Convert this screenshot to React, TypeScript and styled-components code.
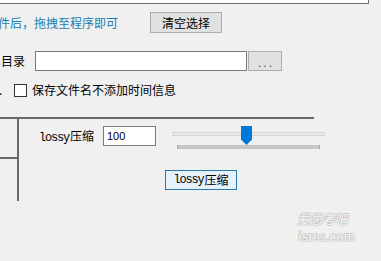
import React from 'react';
import styled, { createGlobalStyle } from 'styled-components';

const Global = createGlobalStyle`
  html, body { margin: 0; padding: 0; background: #f0f0f0; overflow: hidden; }
  body { font-family: "Noto Sans CJK SC", "Noto Sans", sans-serif; font-size: 12px; color: #000; }
`;

const Window = styled.div`
  width: 381px;
  height: 261px;
  overflow: hidden;
  position: relative;
  background: #f0f0f0;
  display: flex;
  flex-direction: column;
`;

const ListBox = styled.div`
  box-sizing: border-box;
  flex: none;
  margin-top: -36px;
  margin-left: -8px;
  width: 377px;
  height: 40px;
  background: #fff;
  border: 1px solid #6e6e6e;
`;

const Row = styled.div<{ $top: number; $left?: number }>`
  display: flex;
  align-items: center;
  flex: none;
  margin-top: ${p => p.$top}px;
  margin-left: ${p => p.$left ?? 0}px;
`;

const Hint = styled.span`
  flex: none;
  margin-left: -14px;
  width: 164px;
  color: #1780b5;
  white-space: nowrap;
  overflow: hidden;
  line-height: 16px;
`;

const Label = styled.span<{ $left: number; $w: number }>`
  flex: none;
  margin-left: ${p => p.$left}px;
  width: ${p => p.$w}px;
  white-space: nowrap;
  overflow: hidden;
  line-height: 16px;
`;

const Button = styled.button<{ $w: number; $h: number; $focused?: boolean }>`
  box-sizing: border-box;
  flex: none;
  width: ${p => p.$w}px;
  height: ${p => p.$h}px;
  margin: 0;
  padding: 0;
  background: ${p => (p.$focused ? '#e5f1fb' : '#e1e1e1')};
  border: 1px solid ${p => (p.$focused ? '#2a7aa6' : '#adadad')};
  font-family: inherit;
  font-size: 12px;
  color: #000;
  line-height: 1;
  display: flex;
  align-items: center;
  justify-content: center;
`;

const BrowseButton = styled(Button)`
  margin-left: 1px;
  font-family: "Liberation Sans", sans-serif;
  color: #444;
  letter-spacing: 2px;
  padding-left: 2px;
  padding-top: 3px;
`;

const TextBox = styled.div<{ $w: number }>`
  box-sizing: border-box;
  flex: none;
  width: ${p => p.$w}px;
  height: 20px;
  background: #fff;
  border: 1px solid #7a7a7a;
  display: flex;
  align-items: center;
  padding-left: 3px;
  font-family: "Liberation Sans", sans-serif;
  font-size: 11px;
`;

const Check = styled.span`
  box-sizing: border-box;
  flex: none;
  width: 13px;
  height: 13px;
  border: 1px solid #333;
  background: #fff;
`;

const Rule = styled.div`
  flex: none;
  margin-top: 19px;
  margin-left: -10px;
  width: 324px;
  height: 2px;
  background: #696969;
`;

const GroupBody = styled.div`
  flex: none;
  display: flex;
  height: 82px;
`;

const LeftCol = styled.div`
  flex: none;
  margin-left: -10px;
  width: 27px;
  border-right: 2px solid #696969;
`;

const LeftCell = styled.div`
  height: 38px;
  border-bottom: 2px solid #696969;
`;

const RightCol = styled.div`
  display: flex;
  flex-direction: column;
  padding-top: 7px;
`;

const ParamRow = styled.div`
  display: flex;
  align-items: flex-start;
`;

const ParamLabel = styled.span`
  flex: none;
  margin-left: 20px;
  width: 64px;
  line-height: 20px;
  white-space: nowrap;
`;

const Latin = styled.span`
  font-family: "Liberation Mono", monospace;
  letter-spacing: -1.2px;
  margin-right: 1px;
`;

const Slider = styled.div`
  position: relative;
  flex: none;
  margin-left: 16px;
  width: 153px;
  height: 24px;
`;

const Track = styled.div`
  position: absolute;
  left: 0;
  top: 6px;
  box-sizing: border-box;
  width: 153px;
  height: 4px;
  background: #e7e7e7;
  border: 1px solid #d6d6d6;
`;

const Ticks = styled.div`
  position: absolute;
  left: 5px;
  top: 19px;
  box-sizing: border-box;
  width: 143px;
  height: 4px;
  background: #c6c6c6;
  border-left: 1px solid #a8a8a8;
  border-right: 1px solid #a8a8a8;
`;

const Thumb = styled.svg`
  position: absolute;
  left: 69px;
  top: 0;
`;

const ActionRow = styled.div`
  display: flex;
  margin-top: 20px;
  margin-left: 146px;
`;

const Watermark = styled.div`
  position: absolute;
  left: 297px;
  top: 210px;
  display: flex;
  flex-direction: column;
  align-items: flex-start;
  color: #f7f7f7;
  text-shadow: -1px 0 #c4c4c4, 0 -1px #c4c4c4, 1px 0 #cfcfcf, 0 1px #cfcfcf;
  pointer-events: none;
`;

const WmTitle = styled.span`
  font-size: 13px;
  line-height: 18px;
  font-style: italic;
  letter-spacing: -0.5px;
`;

const WmSite = styled.span`
  font-family: "Liberation Serif", serif;
  font-size: 15px;
  line-height: 15px;
  margin-top: 1px;
  margin-left: 1px;
`;

export default function App() {
  return (
    <Window>
      <Global />
      <ListBox />
      <Row $top={8}>
        <Hint>文件后，拖拽至程序即可</Hint>
        <Button $w={72} $h={21}>清空选择</Button>
      </Row>
      <Row $top={18}>
        <Label $left={-23} $w={58}>输出目录</Label>
        <TextBox $w={212} />
        <BrowseButton $w={34} $h={20}>...</BrowseButton>
      </Row>
      <Row $top={11}>
        <Label $left={-1} $w={15}>.</Label>
        <Check />
        <Label $left={5} $w={160}>保存文件名不添加时间信息</Label>
      </Row>
      <Rule />
      <GroupBody>
        <LeftCol>
          <LeftCell />
        </LeftCol>
        <RightCol>
          <ParamRow>
            <ParamLabel><Latin>lossy</Latin>压缩</ParamLabel>
            <TextBox $w={53}>100</TextBox>
            <Slider>
              <Track />
              <Ticks />
              <Thumb width="11" height="19" viewBox="0 0 11 19">
                <path d="M0 0 H11 V13.5 L5.5 19 L0 13.5 Z" fill="#0078d7" />
              </Thumb>
            </Slider>
          </ParamRow>
          <ActionRow>
            <Button $w={72} $h={20} $focused><Latin>lossy</Latin>压缩</Button>
          </ActionRow>
        </RightCol>
      </GroupBody>
      <Watermark>
        <WmTitle>爱思考吧</WmTitle>
        <WmSite>isres.com</WmSite>
      </Watermark>
    </Window>
  );
}
